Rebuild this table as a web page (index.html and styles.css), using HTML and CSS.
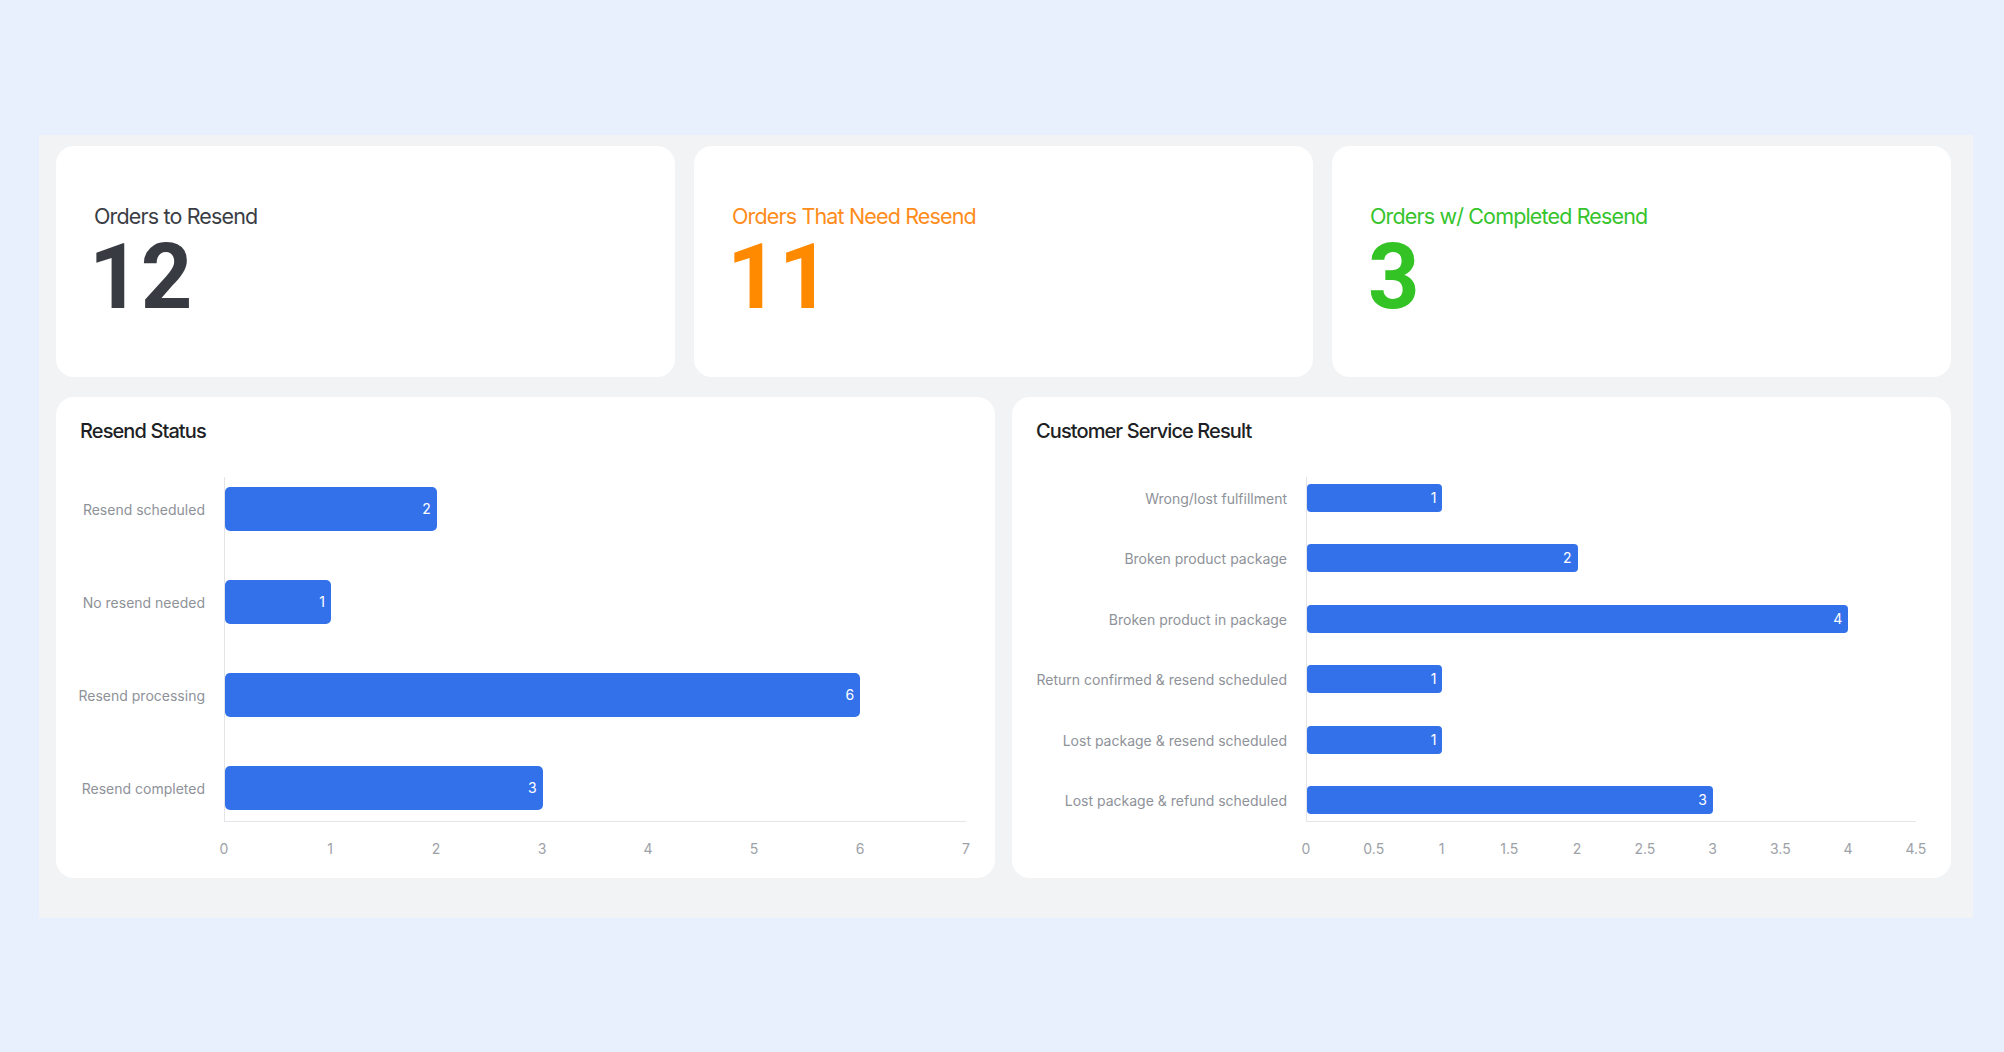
FILE: index.html
```html
<!DOCTYPE html>
<html lang="en">
<head>
<meta charset="utf-8">
<title>Resend Dashboard</title>
<link rel="stylesheet" href="styles.css">
</head>
<body>
<div class="panel">
  <div class="stats">
    <div class="stat-card">
      <div class="stat-label">Orders to Resend</div>
      <div class="stat-value">12</div>
    </div>
    <div class="stat-card stat-card--orange">
      <div class="stat-label">Orders That Need Resend</div>
      <div class="stat-value">11</div>
    </div>
    <div class="stat-card stat-card--green">
      <div class="stat-label">Orders w/ Completed Resend</div>
      <div class="stat-value stat-value--single">3</div>
    </div>
  </div>

  <div class="charts">
    <div class="chart-card chart-card--status">
      <h2 class="chart-title">Resend Status</h2>
      <div class="chart chart--status">
        <div class="labels">
          <div class="label">Resend scheduled</div>
          <div class="label">No resend needed</div>
          <div class="label">Resend processing</div>
          <div class="label">Resend completed</div>
        </div>
        <div class="plot">
          <div class="bar" style="width:28.571%"><span class="bar-value">2</span></div>
          <div class="bar" style="width:14.286%"><span class="bar-value">1</span></div>
          <div class="bar" style="width:85.714%"><span class="bar-value">6</span></div>
          <div class="bar" style="width:42.857%"><span class="bar-value">3</span></div>
        </div>
        <div class="spacer"></div>
        <div class="ticks">
          <span class="tick">0</span><span class="tick">1</span><span class="tick">2</span><span class="tick">3</span><span class="tick">4</span><span class="tick">5</span><span class="tick">6</span><span class="tick">7</span>
        </div>
      </div>
    </div>

    <div class="chart-card chart-card--service">
      <h2 class="chart-title">Customer Service Result</h2>
      <div class="chart chart--service">
        <div class="labels">
          <div class="label">Wrong/lost fulfillment</div>
          <div class="label">Broken product package</div>
          <div class="label">Broken product in package</div>
          <div class="label">Return confirmed &amp; resend scheduled</div>
          <div class="label">Lost package &amp; resend scheduled</div>
          <div class="label">Lost package &amp; refund scheduled</div>
        </div>
        <div class="plot">
          <div class="bar" style="width:22.222%"><span class="bar-value">1</span></div>
          <div class="bar" style="width:44.444%"><span class="bar-value">2</span></div>
          <div class="bar" style="width:88.889%"><span class="bar-value">4</span></div>
          <div class="bar" style="width:22.222%"><span class="bar-value">1</span></div>
          <div class="bar" style="width:22.222%"><span class="bar-value">1</span></div>
          <div class="bar" style="width:66.667%"><span class="bar-value">3</span></div>
        </div>
        <div class="spacer"></div>
        <div class="ticks">
          <span class="tick">0</span><span class="tick">0.5</span><span class="tick">1</span><span class="tick">1.5</span><span class="tick">2</span><span class="tick">2.5</span><span class="tick">3</span><span class="tick">3.5</span><span class="tick">4</span><span class="tick">4.5</span>
        </div>
      </div>
    </div>
  </div>
</div>
</body>
</html>
```

FILE: styles.css
```css
* {
  box-sizing: border-box;
}

html, body {
  margin: 0;
  padding: 0;
}

body {
  background: #e9f0fd;
  font-family: Inter, "Noto Sans", "Liberation Sans", sans-serif;
  width: 2004px;
  min-height: 1052px;
  padding-top: 135px;
}

.panel {
  margin-left: 39px;
  width: 1934px;
  background: #f2f3f5;
  padding: 11px 22px 40px 17px;
}

.stats {
  display: grid;
  grid-template-columns: repeat(3, 1fr);
  column-gap: 19px;
}

.stat-card {
  background: #ffffff;
  border-radius: 18px;
  padding: 57px 38px 55px;
  color: #383b42;
}

.stat-label {
  font-size: 21.5px;
  line-height: 27px;
  font-weight: 400;
  letter-spacing: -0.85px;
  color: #3a3d44;
}

.stat-value {
  margin-top: 4px;
  margin-left: -5px;
  font-family: Roboto, Inter, "Liberation Sans", sans-serif;
  font-size: 90px;
  line-height: 88px;
  font-weight: 700;
  font-variant-numeric: tabular-nums;
  letter-spacing: 0;
}

.stat-value--single {
  margin-left: -2px;
}

.stat-card--orange .stat-label {
  color: #ff8c1a;
}

.stat-card--orange .stat-value {
  color: #ff8a00;
}

.stat-card--green .stat-label {
  color: #36c42c;
}

.stat-card--green .stat-value {
  color: #33c324;
}

.charts {
  margin-top: 20px;
  display: grid;
  grid-template-columns: 1fr 1fr;
  column-gap: 17px;
}

.chart-card {
  background: #ffffff;
  border-radius: 18px;
  padding: 22px 29px 21px 24px;
}

.chart-card--service {
  padding-right: 35px;
}

.chart-title {
  margin: 0;
  font-size: 20px;
  line-height: 24px;
  font-weight: 500;
  letter-spacing: -0.9px;
  color: #1d1f24;
}

.chart {
  margin-top: 34px;
  display: grid;
  column-gap: 19px;
  grid-template-rows: 345px auto;
}

.chart--status {
  grid-template-columns: 125px 1fr;
}

.chart--service {
  grid-template-columns: 251px 1fr;
}

.labels,
.plot {
  display: flex;
  flex-direction: column;
  justify-content: space-between;
  height: 345px;
}

.chart--status .labels,
.chart--status .plot {
  padding: 10px 0 11px;
}

.chart--service .labels,
.chart--service .plot {
  padding: 7px 0 7px;
}

.plot {
  border-left: 1px solid #e2e4e8;
  border-bottom: 1px solid #e4e6ea;
}

.label {
  display: flex;
  align-items: center;
  justify-content: flex-end;
  white-space: nowrap;
  font-size: 14px;
  color: #8e9299;
  text-align: right;
}

.chart--status .label,
.chart--status .bar {
  height: 44px;
}

.chart--service .label,
.chart--service .bar {
  height: 28px;
}

.bar {
  background: #3371eb;
  border-radius: 5px;
  display: flex;
  align-items: center;
  justify-content: flex-end;
  padding-right: 6px;
}

.chart--service .bar {
  border-radius: 4px;
}

.bar-value {
  color: #ffffff;
  font-size: 14px;
  line-height: 1;
}

.ticks {
  margin-top: 18px;
  display: flex;
  justify-content: space-between;
  line-height: 17px;
}

.tick {
  width: 0;
  display: flex;
  justify-content: center;
  white-space: nowrap;
  font-size: 14px;
  color: #9da1a8;
}
```
